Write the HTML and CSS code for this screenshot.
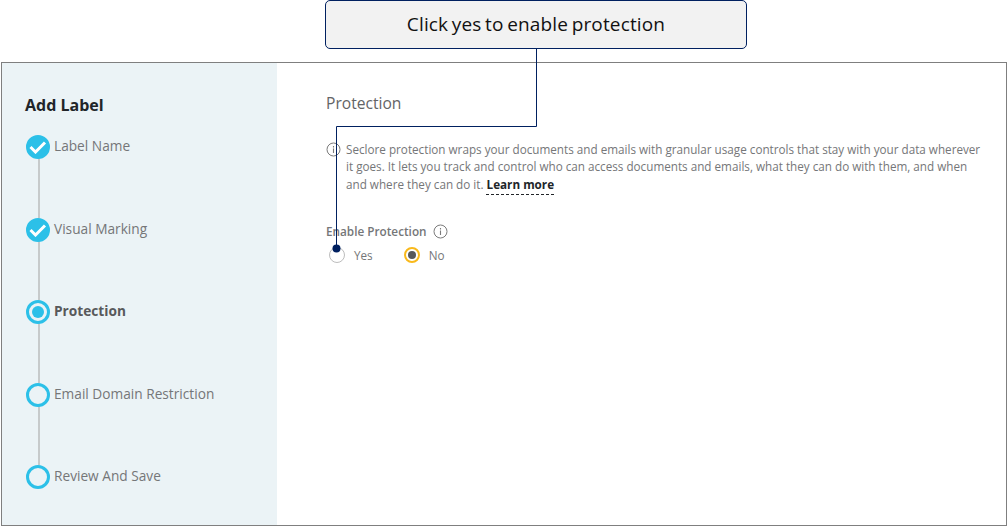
FILE: index.html
```html
<!DOCTYPE html>
<html lang="en">
<head>
  <meta charset="UTF-8">
  <title>Add Label - Protection</title>
  <link rel="stylesheet" href="styles.css">
</head>
<body>
  <!-- callout above the screenshot -->
  <div class="callout-row">
    <div class="callout">Click yes to enable protection</div>
  </div>

  <div class="frame">
    <aside class="side">
      <h1>Add Label</h1>
      <ol class="steps">
        <li class="step done">
          <span class="dot"><svg width="18" height="14" viewBox="0 0 18 14"><path d="M1.5 7 L6.5 12 L16 2.5" fill="none" stroke="#fff" stroke-width="3"/></svg></span>
          <span class="step-name">Label Name</span>
        </li>
        <li class="step done">
          <span class="dot"><svg width="18" height="14" viewBox="0 0 18 14"><path d="M1.5 7 L6.5 12 L16 2.5" fill="none" stroke="#fff" stroke-width="3"/></svg></span>
          <span class="step-name">Visual Marking</span>
        </li>
        <li class="step current">
          <span class="dot"></span>
          <span class="step-name">Protection</span>
        </li>
        <li class="step">
          <span class="dot"></span>
          <span class="step-name">Email Domain Restriction</span>
        </li>
        <li class="step">
          <span class="dot"></span>
          <span class="step-name">Review And Save</span>
        </li>
      </ol>
    </aside>

    <main class="content">
      <h2>Protection</h2>
      <div class="info">
        <svg class="i-icon" width="15" height="15" viewBox="0 0 15 15"><circle cx="7.5" cy="7.5" r="6.5" fill="none" stroke="#7b7b7b"/><path d="M7.5 6.5v4.5M7.5 4v1.4" stroke="#7b7b7b" stroke-width="1.1"/></svg>
        <p>Seclore protection wraps your documents and emails with granular usage controls that stay with your data wherever it goes. It lets you track and control who can access documents and emails, what they can do with them, and when and where they can do it. <a class="more">Learn more</a></p>
      </div>
      <div class="field-label">Enable Protection
        <svg width="15" height="15" viewBox="0 0 15 15"><circle cx="7.5" cy="7.5" r="6.5" fill="none" stroke="#7b7b7b"/><path d="M7.5 6.5v4.5M7.5 4v1.4" stroke="#7b7b7b" stroke-width="1.1"/></svg>
      </div>
      <div class="radios">
        <label class="radio"><span class="mark"></span>Yes</label>
        <label class="radio on"><span class="mark"></span>No</label>
      </div>
    </main>
  </div>

  <!-- connector from callout down to the Yes radio -->
  <svg class="connector" width="1007" height="527" viewBox="0 0 1007 527">
    <path d="M536.5 48V126.5H336.5V248" fill="none" stroke="#002060" stroke-width="1"/>
    <circle cx="336.5" cy="248.5" r="4" fill="#002060"/>
  </svg>
</body>
</html>
```

FILE: styles.css
```css
* {box-sizing: border-box;}
html,body{height:100%;}
body{margin:0;width:1007px;height:527px;overflow:hidden;position:relative;background:#fff;font-family:"Open Sans",sans-serif;color:#757678;}

.callout-row{height:62px;padding-left:325px;}
.callout{width:422px;height:49px;background:#f2f2f2;border:1px solid #002060;border-radius:5px;color:#111;font-size:19px;line-height:47px;text-align:center;word-spacing:-1.5px;letter-spacing:.15px;}

.frame{display:flex;height:464px;margin:0 0 0 1px;border:1px solid #7f7f7f;}
.side{width:275px;background:#ebf3f6;padding:31px 0 0 23px;flex:none;}
.side h1{margin:0;font-size:16px;line-height:22px;font-weight:700;color:#212529;}

.steps{list-style:none;margin:19px 0 0 1px;padding:0;}
.step{display:flex;height:82.5px;position:relative;align-items:flex-start;}
.step:not(:last-child)::before{content:"";position:absolute;left:11.5px;top:20px;bottom:0;width:2px;background:#c6cacb;}
.dot{position:relative;width:24px;height:24px;margin-right:4px;border-radius:50%;border:3px solid #2cc0e8;flex:none;display:flex;align-items:center;justify-content:center;background:#ebf3f6;}
.done .dot{background:#2cc0e8;}
.current .dot::after{content:"";width:12px;height:12px;border-radius:50%;background:#2cc0e8;}
.step-name{font-size:13.7px;line-height:20px;margin-top:1px;color:#757678;}
.current .step-name{font-weight:700;color:#58595b;}

.content{flex:1;padding:28px 20px 0 49px;}
.content h2{margin:0;font-size:15.6px;line-height:24px;font-weight:400;color:#636466;}
.info{display:flex;margin-top:25.5px;}
.i-icon{flex:none;margin:1.5px 5px 0 0;}
.info p{margin:0;font-size:11.7px;line-height:17.8px;color:#757678;}
.more{font-weight:700;color:#212529;text-decoration:underline dashed 1px;text-underline-offset:5px;}

.field-label{display:flex;align-items:center;gap:6px;margin-top:27.5px;font-size:11.75px;line-height:20px;font-weight:600;color:#757678;}
.radios{display:flex;gap:32px;margin-top:4px;padding-left:3px;}
.radio{display:flex;align-items:center;gap:9px;font-size:11.7px;line-height:20px;color:#757678;}
.radio.on{margin-left:-1px;}
.mark{width:16px;height:16px;border-radius:50%;border:1px solid #bdbdbd;display:flex;align-items:center;justify-content:center;background:#fff;}
.on .mark{border:2px solid #f9b91b;}
.on .mark::after{content:"";width:8px;height:8px;border-radius:50%;background:#58595b;}

.connector{position:absolute;left:0;top:0;pointer-events:none;}
```
